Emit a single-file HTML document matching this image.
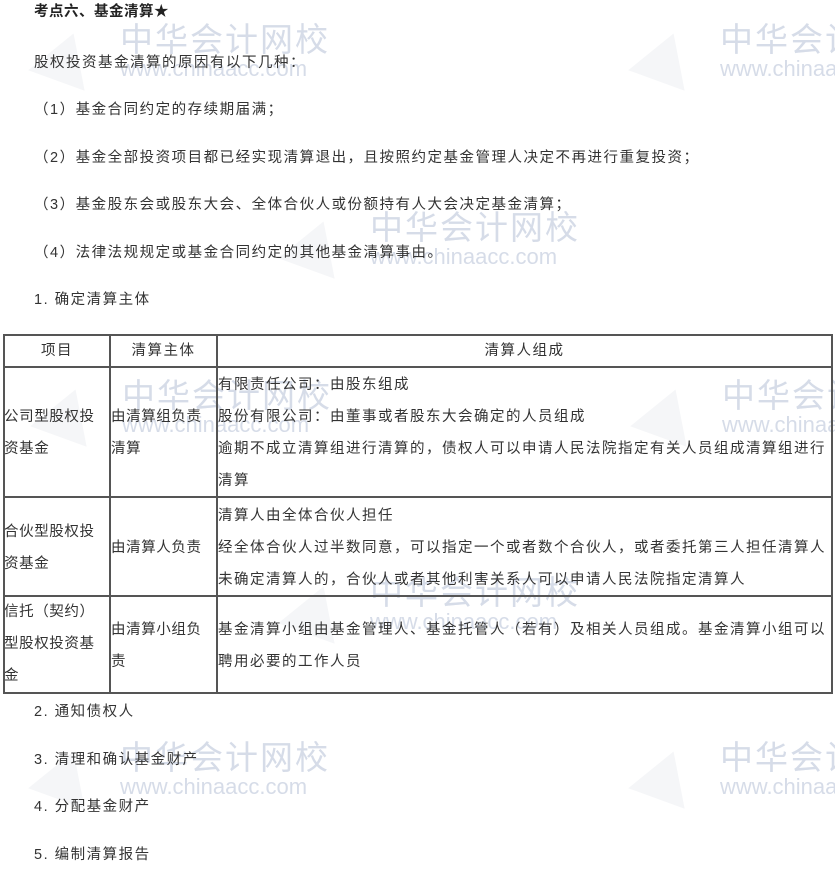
<!DOCTYPE html>
<html><head><meta charset="utf-8"><style>
body{margin:0;width:835px;height:873px;background:#fff;position:relative;overflow:hidden;font-family:"Liberation Sans","Noto Sans CJK SC",sans-serif;font-size:14.5px;letter-spacing:1.5px;color:#333}
.t{position:absolute;left:34px;white-space:nowrap;line-height:20px;z-index:2}
.wm{position:absolute;color:#d6dce8;white-space:nowrap;z-index:0;letter-spacing:0}
.wm .a{font-size:33px;line-height:36px;letter-spacing:2px}
.wm .b{font-size:22px;line-height:22px;font-family:"Liberation Sans",sans-serif}
.wm .tri{position:absolute;left:-85px;top:10px;width:0;height:0;border-left:30px solid transparent;border-right:30px solid transparent;border-bottom:50px solid #f5f6f8;transform:rotate(20deg)}
.v{position:absolute;background:#555;z-index:3}
.c{position:absolute;line-height:32px;white-space:nowrap;z-index:2}
</style></head><body>
<div class="wm" style="left:120px;top:22px"><div class="tri"></div><div class="a">中华会计网校</div><div class="b">www.chinaacc.com</div></div>
<div class="wm" style="left:720px;top:22px"><div class="tri"></div><div class="a">中华会计网校</div><div class="b">www.chinaacc.com</div></div>
<div class="wm" style="left:370px;top:210px"><div class="tri"></div><div class="a">中华会计网校</div><div class="b">www.chinaacc.com</div></div>
<div class="wm" style="left:122px;top:378px"><div class="tri"></div><div class="a">中华会计网校</div><div class="b">www.chinaacc.com</div></div>
<div class="wm" style="left:722px;top:378px"><div class="tri"></div><div class="a">中华会计网校</div><div class="b">www.chinaacc.com</div></div>
<div class="wm" style="left:370px;top:575px"><div class="tri"></div><div class="a">中华会计网校</div><div class="b">www.chinaacc.com</div></div>
<div class="wm" style="left:120px;top:740px"><div class="tri"></div><div class="a">中华会计网校</div><div class="b">www.chinaacc.com</div></div>
<div class="wm" style="left:720px;top:740px"><div class="tri"></div><div class="a">中华会计网校</div><div class="b">www.chinaacc.com</div></div>

<div class="t" style="top:2px;font-weight:bold;color:#222;letter-spacing:0.5px">考点六、基金清算★</div>
<div class="t" style="top:53px">股权投资基金清算的原因有以下几种：</div>
<div class="t" style="top:100px">（1）基金合同约定的存续期届满；</div>
<div class="t" style="top:148px">（2）基金全部投资项目都已经实现清算退出，且按照约定基金管理人决定不再进行重复投资；</div>
<div class="t" style="top:195px">（3）基金股东会或股东大会、全体合伙人或份额持有人大会决定基金清算；</div>
<div class="t" style="top:243px">（4）法律法规规定或基金合同约定的其他基金清算事由。</div>
<div class="t" style="top:290px">1. 确定清算主体</div>

<div class="v" style="left:3px;top:334px;width:830px;height:2px"></div>
<div class="v" style="left:3px;top:366px;width:830px;height:2px"></div>
<div class="v" style="left:3px;top:496px;width:830px;height:2px"></div>
<div class="v" style="left:3px;top:595px;width:830px;height:2px"></div>
<div class="v" style="left:3px;top:692px;width:830px;height:2px"></div>
<div class="v" style="left:3px;top:334px;width:2px;height:360px"></div>
<div class="v" style="left:109px;top:334px;width:2px;height:360px"></div>
<div class="v" style="left:216px;top:334px;width:2px;height:360px"></div>
<div class="v" style="left:831px;top:334px;width:2px;height:360px"></div>

<div class="c" style="left:5px;width:104px;top:335px;text-align:center">项目</div>
<div class="c" style="left:111px;width:105px;top:335px;text-align:center">清算主体</div>
<div class="c" style="left:218px;width:613px;top:335px;text-align:center">清算人组成</div>

<div class="c" style="left:4px;top:401px;letter-spacing:0.6px">公司型股权投<br>资基金</div>
<div class="c" style="left:111px;top:401px;letter-spacing:0.6px">由清算组负责<br>清算</div>
<div class="c" style="left:218px;top:369px">有限责任公司：由股东组成<br>股份有限公司：由董事或者股东大会确定的人员组成<br>逾期不成立清算组进行清算的，债权人可以申请人民法院指定有关人员组成清算组进行<br>清算</div>

<div class="c" style="left:4px;top:516px;letter-spacing:0.6px">合伙型股权投<br>资基金</div>
<div class="c" style="left:111px;top:532px;letter-spacing:0.6px">由清算人负责</div>
<div class="c" style="left:218px;top:500px">清算人由全体合伙人担任<br>经全体合伙人过半数同意，可以指定一个或者数个合伙人，或者委托第三人担任清算人<br>未确定清算人的，合伙人或者其他利害关系人可以申请人民法院指定清算人</div>

<div class="c" style="left:4px;top:596px;letter-spacing:0.6px">信托（契约）<br>型股权投资基<br>金</div>
<div class="c" style="left:111px;top:614px;letter-spacing:0.6px">由清算小组负<br>责</div>
<div class="c" style="left:218px;top:614px">基金清算小组由基金管理人、基金托管人（若有）及相关人员组成。基金清算小组可以<br>聘用必要的工作人员</div>

<div class="t" style="top:702px">2. 通知债权人</div>
<div class="t" style="top:750px">3. 清理和确认基金财产</div>
<div class="t" style="top:797px">4. 分配基金财产</div>
<div class="t" style="top:845px">5. 编制清算报告</div>
</body></html>
